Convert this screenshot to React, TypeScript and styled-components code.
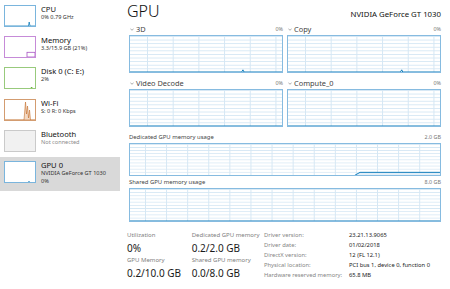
import React from 'react';
import styled, { createGlobalStyle } from 'styled-components';

const GlobalStyle = createGlobalStyle`
  html, body {
    margin: 0;
    padding: 0;
    background: #fff;
  }
  body {
    font-family: 'Segoe UI', 'Noto Sans', 'Open Sans', sans-serif;
    color: #1a1a1a;
    overflow: hidden;
  }
`;

const Window = styled.div`
  display: flex;
  width: 450px;
  height: 289px;
  background: #fff;
`;

/* ---------- left list ---------- */

const Sidebar = styled.nav`
  width: 120px;
  flex-shrink: 0;
  display: flex;
  flex-direction: column;
`;

const NavItem = styled.div<{ $active?: boolean; $tall?: boolean }>`
  display: flex;
  gap: 5px;
  box-sizing: border-box;
  height: ${(p) => (p.$tall ? '34px' : '31.4px')};
  padding: 4.5px 0 0 4px;
  background: ${(p) => (p.$active ? '#d9d9d9' : 'transparent')};
`;

const Thumb = styled.div<{ $color: string; $bg?: string }>`
  position: relative;
  flex-shrink: 0;
  box-sizing: border-box;
  width: 32px;
  height: 22px;
  border: 1px solid ${(p) => p.$color};
  background: ${(p) => p.$bg ?? '#fff'};

  svg {
    position: absolute;
    inset: 0;
    width: 100%;
    height: 100%;
  }
`;

const NavText = styled.div`
  display: flex;
  flex-direction: column;
  margin-top: -1px;
`;

const NavTitle = styled.span`
  font-size: 7.6px;
  line-height: 10px;
  color: #111;
`;

const NavSub = styled.span<{ $muted?: boolean }>`
  font-size: 5.6px;
  line-height: 7.5px;
  color: ${(p) => (p.$muted ? '#8a8a8a' : '#333')};
  white-space: nowrap;
`;

/* ---------- main panel ---------- */

const Main = styled.main`
  flex: 1;
  min-width: 0;
  display: flex;
  flex-direction: column;
  padding: 0 9px 0 7px;
`;

const Header = styled.header`
  display: flex;
  justify-content: space-between;
  align-items: baseline;
  height: 23px;
`;

const Title = styled.h1`
  margin: 0;
  font-size: 16px;
  line-height: 23px;
  font-weight: 300;
  color: #111;
`;

const Adapter = styled.span`
  font-size: 7.8px;
  color: #111;
`;

const Charts = styled.section`
  margin-left: 2px;
  display: flex;
  flex-direction: column;
`;

const EngineGrid = styled.div`
  display: grid;
  grid-template-columns: 1fr 1fr;
  gap: 4px;
`;

const ChartLabel = styled.div<{ $h: number; $size: number }>`
  display: flex;
  justify-content: space-between;
  align-items: center;
  height: ${(p) => p.$h}px;
  font-size: ${(p) => p.$size}px;
  color: #444;
  white-space: nowrap;
`;

const LabelName = styled.span`
  display: flex;
  align-items: center;
  gap: 2px;

  svg {
    width: 4px;
    height: 3px;
    margin-left: 1px;
  }
`;

const Scale = styled.span`
  font-size: 5.4px;
  color: #777;
`;

const Chart = styled.div<{ $h: number; $step: number; $offset: number }>`
  position: relative;
  box-sizing: border-box;
  height: ${(p) => p.$h}px;
  border: 1px solid #86bbe0;
  background-color: #fff;
  background-image: linear-gradient(to right, #d5e7f4 1px, transparent 1px),
    linear-gradient(to bottom, #d5e7f4 1px, transparent 1px);
  background-size: ${(p) => p.$step}px 100%, 100% 10%;
  background-position: ${(p) => p.$offset}px 0, 0 0;

  svg {
    position: absolute;
    inset: 0;
    width: 100%;
    height: 100%;
  }
`;

const MemBlock = styled.div<{ $gap?: number }>`
  display: flex;
  flex-direction: column;
  margin-top: ${(p) => p.$gap ?? 0}px;
`;

const Stats = styled.section`
  display: flex;
  margin-top: 8px;
`;

const StatGrid = styled.div`
  width: 137px;
  display: grid;
  grid-template-columns: 64.7px 1fr;
`;

const Stat = styled.div`
  display: flex;
  flex-direction: column;
`;

const StatLabel = styled.span`
  font-size: 6px;
  line-height: 11px;
  color: #808080;
  white-space: nowrap;
`;

const StatValue = styled.span`
  font-size: 10px;
  line-height: 14px;
  color: #1a1a1a;
  white-space: nowrap;
`;

const InfoTable = styled.dl`
  margin: 0;
  display: grid;
  grid-template-columns: 85px auto;
  grid-auto-rows: 10px;
  align-items: center;
  font-size: 5.8px;
  white-space: nowrap;
`;

const InfoKey = styled.dt`
  color: #858585;
`;

const InfoVal = styled.dd`
  margin: 0;
  color: #1a1a1a;
`;

/* ---------- drawings ---------- */

const ChevronIcon = () => (
  <svg viewBox="0 0 4 3">
    <polyline points="0.4,0.6 2,2.3 3.6,0.6" fill="none" stroke="#888" strokeWidth={0.7} />
  </svg>
);

const Trace = ({ points, fill }: { points: string; fill?: boolean }) => (
  <svg viewBox="0 0 100 100" preserveAspectRatio="none">
    {fill && <polygon points={`${points} 100,100`} fill="#e3eff8" />}
    <polyline
      points={points}
      fill="none"
      stroke="#117dbb"
      strokeWidth={1}
      vectorEffect="non-scaling-stroke"
    />
  </svg>
);

const thumbs: Record<string, React.ReactNode> = {
  cpu: (
    <svg viewBox="0 0 30 20" preserveAspectRatio="none">
      <polyline points="0,20 23.5,20 24.2,16 25,20 30,20" fill="none" stroke="#117dbb" strokeWidth={0.8} />
    </svg>
  ),
  mem: (
    <svg viewBox="0 0 30 20" preserveAspectRatio="none">
      <rect x="22" y="15.3" width="8" height="4.7" fill="#fff" stroke="#a855c4" strokeWidth={0.8} />
    </svg>
  ),
  disk: (
    <svg viewBox="0 0 30 20" preserveAspectRatio="none">
      <polyline points="26,20 26.6,19 27.2,20" fill="none" stroke="#4da60c" strokeWidth={0.8} />
    </svg>
  ),
  wifi: (
    <svg viewBox="0 0 30 20" preserveAspectRatio="none">
      <polygon
        points="0,20 19,20 20.5,2 21.5,14 22.5,6 23.5,18 24.5,10 25.5,20 30,20"
        fill="#f3d9c4"
        stroke="#c46f2b"
        strokeWidth={0.6}
      />
    </svg>
  ),
  bt: null,
  gpu: (
    <svg viewBox="0 0 30 20" preserveAspectRatio="none">
      <polyline points="23.5,20 24,19.2 24.5,20" fill="none" stroke="#117dbb" strokeWidth={0.8} />
    </svg>
  ),
};

const devices = [
  { kind: 'cpu', title: 'CPU', lines: ['0% 0.79 GHz'], color: '#7ab5dd' },
  { kind: 'mem', title: 'Memory', lines: ['3.3/15.9 GB (21%)'], color: '#c68bd8' },
  { kind: 'disk', title: 'Disk 0 (C: E:)', lines: ['2%'], color: '#98ca7c' },
  { kind: 'wifi', title: 'Wi-Fi', lines: ['S: 0 R: 0 Kbps'], color: '#d39c70' },
  { kind: 'bt', title: 'Bluetooth', lines: ['Not connected'], color: '#cacaca', bg: '#f1f1f1', muted: true },
  { kind: 'gpu', title: 'GPU 0', lines: ['NVIDIA GeForce GT 1030', '0%'], color: '#7ab5dd', active: true },
];

const engines = [
  { name: '3D', trace: '0,100 73.5,100 74.3,94 75,100 100,100' },
  { name: 'Copy', trace: '0,100 74,100 74.8,94 75.5,100 100,100' },
  { name: 'Video Decode', trace: '0,100 100,100' },
  { name: 'Compute_0', trace: '0,100 100,100' },
];

const info: [string, string][] = [
  ['Driver version:', '23.21.13.9065'],
  ['Driver date:', '01/02/2018'],
  ['DirectX version:', '12 (FL 12.1)'],
  ['Physical location:', 'PCI bus 1, device 0, function 0'],
  ['Hardware reserved memory:', '65.8 MB'],
];

export default function App() {
  return (
    <>
      <GlobalStyle />
      <Window>
        <Sidebar>
          {devices.map((d) => (
            <NavItem key={d.kind} $active={d.active} $tall={d.active}>
              <Thumb $color={d.color} $bg={d.bg}>
                {thumbs[d.kind]}
              </Thumb>
              <NavText>
                <NavTitle>{d.title}</NavTitle>
                {d.lines.map((l) => (
                  <NavSub key={l} $muted={d.muted}>
                    {l}
                  </NavSub>
                ))}
              </NavText>
            </NavItem>
          ))}
        </Sidebar>

        <Main>
          <Header>
            <Title>GPU</Title>
            <Adapter>NVIDIA GeForce GT 1030</Adapter>
          </Header>

          <Charts>
            <EngineGrid>
              {engines.map((e) => (
                <div key={e.name}>
                  <ChartLabel $h={12} $size={7.4}>
                    <LabelName>
                      <ChevronIcon />
                      {e.name}
                    </LabelName>
                    <Scale>0%</Scale>
                  </ChartLabel>
                  <Chart $h={38} $step={25.7} $offset={17}>
                    <Trace points={e.trace} />
                  </Chart>
                </div>
              ))}
            </EngineGrid>

            <MemBlock $gap={4}>
              <ChartLabel $h={11.5} $size={5.9}>
                <span>Dedicated GPU memory usage</span>
                <Scale>2.0 GB</Scale>
              </ChartLabel>
              <Chart $h={33.5} $step={21.1} $offset={15}>
                <Trace points="0,100 72.4,100 74.2,90 100,90" fill />
              </Chart>
            </MemBlock>

            <MemBlock>
              <ChartLabel $h={12} $size={5.9}>
                <span>Shared GPU memory usage</span>
                <Scale>8.0 GB</Scale>
              </ChartLabel>
              <Chart $h={34} $step={21.1} $offset={15}>
                <Trace points="0,100 100,100" />
              </Chart>
            </MemBlock>
          </Charts>

          <Stats>
            <StatGrid>
              <Stat>
                <StatLabel>Utilization</StatLabel>
                <StatValue>0%</StatValue>
              </Stat>
              <Stat>
                <StatLabel>Dedicated GPU memory</StatLabel>
                <StatValue>0.2/2.0 GB</StatValue>
              </Stat>
              <Stat>
                <StatLabel>GPU Memory</StatLabel>
                <StatValue>0.2/10.0 GB</StatValue>
              </Stat>
              <Stat>
                <StatLabel>Shared GPU memory</StatLabel>
                <StatValue>0.0/8.0 GB</StatValue>
              </Stat>
            </StatGrid>
            <InfoTable>
              {info.map(([k, v]) => (
                <React.Fragment key={k}>
                  <InfoKey>{k}</InfoKey>
                  <InfoVal>{v}</InfoVal>
                </React.Fragment>
              ))}
            </InfoTable>
          </Stats>
        </Main>
      </Window>
    </>
  );
}
